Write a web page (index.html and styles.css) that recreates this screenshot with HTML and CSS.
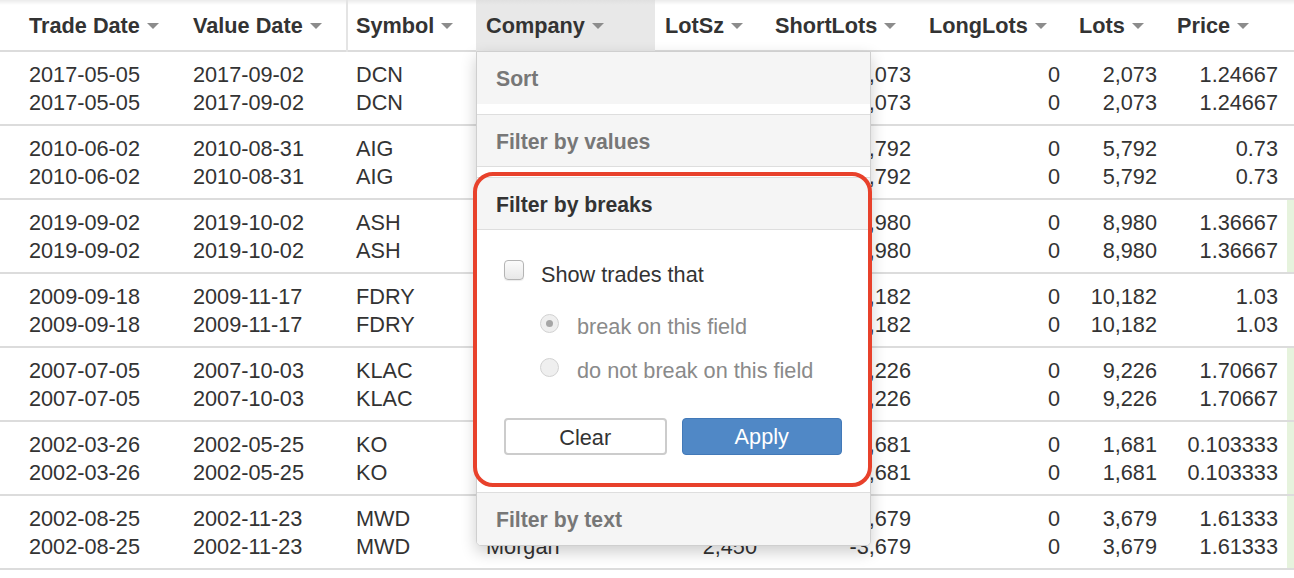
FILE: index.html
```html
<!DOCTYPE html>
<html>
<head>
<meta charset="utf-8">
<title>Trades</title>
<link rel="stylesheet" href="styles.css">
</head>
<body>
<div class="page">
  <div class="head">
    <div class="hc">Trade Date<span class="caret"></span></div>
    <div class="hc">Value Date<span class="caret"></span></div>
    <div class="hc sym">Symbol<span class="caret"></span></div>
    <div class="hc active">Company<span class="caret"></span></div>
    <div class="hc">LotSz<span class="caret"></span></div>
    <div class="hc">ShortLots<span class="caret"></span></div>
    <div class="hc">LongLots<span class="caret"></span></div>
    <div class="hc">Lots<span class="caret"></span></div>
    <div class="hc">Price<span class="caret"></span></div>
  </div>

  <div class="group">
    <div class="rows">
      <div class="row"><span>2017-05-05</span><span>2017-09-02</span><span>DCN</span><span class="co">Dana</span><span class="r r5">1,000</span><span class="r r6">-2,073</span><span class="r r7">0</span><span class="r r8">2,073</span><span class="r r9">1.24667</span></div>
      <div class="row"><span>2017-05-05</span><span>2017-09-02</span><span>DCN</span><span class="co">Dana</span><span class="r r5">1,000</span><span class="r r6">-2,073</span><span class="r r7">0</span><span class="r r8">2,073</span><span class="r r9">1.24667</span></div>
    </div>
    <div class="strip"></div>
  </div>

  <div class="group">
    <div class="rows">
      <div class="row"><span>2010-06-02</span><span>2010-08-31</span><span>AIG</span><span class="co">AIG Inc</span><span class="r r5">1,500</span><span class="r r6">-5,792</span><span class="r r7">0</span><span class="r r8">5,792</span><span class="r r9">0.73</span></div>
      <div class="row"><span>2010-06-02</span><span>2010-08-31</span><span>AIG</span><span class="co">AIG Inc</span><span class="r r5">1,500</span><span class="r r6">-5,792</span><span class="r r7">0</span><span class="r r8">5,792</span><span class="r r9">0.73</span></div>
    </div>
    <div class="strip"></div>
  </div>

  <div class="group">
    <div class="rows">
      <div class="row"><span>2019-09-02</span><span>2019-10-02</span><span>ASH</span><span class="co">Ashland</span><span class="r r5">2,000</span><span class="r r6">-8,980</span><span class="r r7">0</span><span class="r r8">8,980</span><span class="r r9">1.36667</span></div>
      <div class="row"><span>2019-09-02</span><span>2019-10-02</span><span>ASH</span><span class="co">Ashland</span><span class="r r5">2,000</span><span class="r r6">-8,980</span><span class="r r7">0</span><span class="r r8">8,980</span><span class="r r9">1.36667</span></div>
    </div>
    <div class="strip ok"></div>
  </div>

  <div class="group">
    <div class="rows">
      <div class="row"><span>2009-09-18</span><span>2009-11-17</span><span>FDRY</span><span class="co">Foundry</span><span class="r r5">2,500</span><span class="r r6">-10,182</span><span class="r r7">0</span><span class="r r8">10,182</span><span class="r r9">1.03</span></div>
      <div class="row"><span>2009-09-18</span><span>2009-11-17</span><span>FDRY</span><span class="co">Foundry</span><span class="r r5">2,500</span><span class="r r6">-10,182</span><span class="r r7">0</span><span class="r r8">10,182</span><span class="r r9">1.03</span></div>
    </div>
    <div class="strip"></div>
  </div>

  <div class="group">
    <div class="rows">
      <div class="row"><span>2007-07-05</span><span>2007-10-03</span><span>KLAC</span><span class="co">KLA</span><span class="r r5">1,800</span><span class="r r6">-9,226</span><span class="r r7">0</span><span class="r r8">9,226</span><span class="r r9">1.70667</span></div>
      <div class="row"><span>2007-07-05</span><span>2007-10-03</span><span>KLAC</span><span class="co">KLA</span><span class="r r5">1,800</span><span class="r r6">-9,226</span><span class="r r7">0</span><span class="r r8">9,226</span><span class="r r9">1.70667</span></div>
    </div>
    <div class="strip ok"></div>
  </div>

  <div class="group">
    <div class="rows">
      <div class="row"><span>2002-03-26</span><span>2002-05-25</span><span>KO</span><span class="co">Coca-Cola</span><span class="r r5">1,200</span><span class="r r6">-1,681</span><span class="r r7">0</span><span class="r r8">1,681</span><span class="r r9">0.103333</span></div>
      <div class="row"><span>2002-03-26</span><span>2002-05-25</span><span>KO</span><span class="co">Coca-Cola</span><span class="r r5">1,200</span><span class="r r6">-1,681</span><span class="r r7">0</span><span class="r r8">1,681</span><span class="r r9">0.103333</span></div>
    </div>
    <div class="strip ok"></div>
  </div>

  <div class="group">
    <div class="rows">
      <div class="row"><span>2002-08-25</span><span>2002-11-23</span><span>MWD</span><span class="co">Morgan</span><span class="r r5">2,450</span><span class="r r6">-3,679</span><span class="r r7">0</span><span class="r r8">3,679</span><span class="r r9">1.61333</span></div>
      <div class="row"><span>2002-08-25</span><span>2002-11-23</span><span>MWD</span><span class="co">Morgan</span><span class="r r5">2,450</span><span class="r r6">-3,679</span><span class="r r7">0</span><span class="r r8">3,679</span><span class="r r9">1.61333</span></div>
    </div>
    <div class="strip ok"></div>
  </div>

  <div class="menu">
    <div class="sec">
      <div class="sec-head plain">Sort</div>
      <div class="sec-gap"></div>
    </div>
    <div class="sec">
      <div class="sec-head">Filter by values</div>
      <div class="sec-gap"></div>
    </div>
    <div class="sec">
      <div class="sec-head open">Filter by breaks</div>
      <div class="sec-body">
        <div class="opt">
          <span class="cb"></span>
          <span class="opt-label">Show trades that</span>
        </div>
        <div class="opt sub first">
          <span class="rd checked"></span>
          <span class="opt-label dis">break on this field</span>
        </div>
        <div class="opt sub">
          <span class="rd"></span>
          <span class="opt-label dis">do not break on this field</span>
        </div>
        <div class="btns">
          <button class="btn">Clear</button>
          <button class="btn primary">Apply</button>
        </div>
      </div>
    </div>
    <div class="sec last">
      <div class="sec-head plain">Filter by text</div>
    </div>
  </div>

  <div class="annot"></div>
</div>
</body>
</html>
```

FILE: styles.css
```css
* { box-sizing: border-box; }

html, body {
  margin: 0;
  padding: 0;
  background: #fff;
}

body {
  font-family: "Liberation Sans", Arial, Helvetica, sans-serif;
  font-size: 21.7px;
  color: #333;
  overflow: hidden;
}

.page {
  position: relative;
  width: 1294px;
  height: 578px;
  overflow: hidden;
}

.head {
  display: grid;
  grid-template-columns: 164px 163px 130px 179px 110px 154px 150px 98px 120px;
  padding-left: 19px;
  height: 52px;
  border-bottom: 2px solid #dcdcdc;
  background: linear-gradient(to bottom, #ebebeb 0, #ffffff 5px);
}

.hc {
  font-weight: bold;
  line-height: 52px;
  padding-left: 10px;
  white-space: nowrap;
  color: #333;
}

.hc.sym {
  border-left: 2px solid #e4e4e4;
  padding-left: 8px;
}

.hc.active {
  background: linear-gradient(to bottom, #e0e0e0 0, #e8e8e8 5px, #e8e8e8 100%);
}

.caret {
  display: inline-block;
  width: 0;
  height: 0;
  margin-left: 7px;
  vertical-align: middle;
  border-top: 6px solid #8c8c8c;
  border-left: 6px solid transparent;
  border-right: 6px solid transparent;
  position: relative;
  top: -1px;
}

.group {
  display: flex;
  border-bottom: 2px solid #dcdcdc;
}

.rows {
  flex: 0 0 1287px;
  padding: 9px 0 7px 19px;
}

.row {
  display: grid;
  grid-template-columns: 164px 163px 130px 179px 110px 154px 150px 98px 120px;
  line-height: 28px;
  white-space: nowrap;
}

.row > span {
  padding-left: 10px;
  overflow: hidden;
}

.row > .r { text-align: right; }
.row > .r5 { padding-right: 8px; }
.row > .r6 { padding-right: 8px; }
.row > .r7 { padding-right: 9px; }
.row > .r8 { padding-right: 10px; }
.row > .r9 { padding-right: 9px; }

.strip {
  flex: 1 1 auto;
}

.strip.ok {
  background: #e6f3dd;
}

/* dropdown menu */
.menu {
  position: absolute;
  left: 476px;
  top: 51px;
  width: 395px;
  background: #fff;
  border: 1px solid #cfcfcf;
  border-radius: 0 0 5px 5px;
  box-shadow: 0 6px 16px rgba(0, 0, 0, 0.2);
  overflow: hidden;
}

.sec {
  border-bottom: 1px solid #dedede;
}

.sec.last {
  border-bottom: 0;
}

.sec-head {
  height: 52px;
  line-height: 53px;
  padding-left: 19px;
  background: #f5f5f5;
  border-bottom: 1px solid #dedede;
  font-weight: bold;
  font-size: 21.2px;
  color: #777;
  overflow: hidden;
}

.sec-head.plain {
  border-bottom: 0;
}

.sec-head.open {
  color: #333;
}

.sec-gap {
  height: 10px;
}

.sec-body {
  padding: 30px 28px 37px 27px;
}

.opt {
  display: flex;
  align-items: flex-start;
  height: 28px;
  line-height: 30px;
}

.opt.sub {
  padding-left: 36px;
  margin-top: 16px;
}

.opt.sub.first {
  margin-top: 24px;
}

.cb {
  flex: 0 0 20px;
  width: 20px;
  height: 20px;
  border: 1px solid #b4b4b4;
  border-radius: 4px;
  background: linear-gradient(to bottom, #fbfbfb, #e8e8e8);
  box-shadow: 0 1px 1px rgba(0, 0, 0, 0.08);
  margin-right: 17px;
}

.rd {
  flex: 0 0 19px;
  width: 19px;
  height: 19px;
  margin-top: 2px;
  border: 1px solid #d2d2d2;
  border-radius: 50%;
  background: #efefef;
  margin-right: 18px;
  display: flex;
  align-items: center;
  justify-content: center;
}

.rd.checked::after {
  content: "";
  width: 7px;
  height: 7px;
  border-radius: 50%;
  background: #a6a6a6;
}

.opt-label {
  color: #333;
  font-size: 21.7px;
  white-space: nowrap;
}

.opt-label.dis {
  color: #8a8a8a;
}

.btns {
  display: flex;
  gap: 15px;
  margin-top: 34px;
}

.btn {
  flex: 1 1 0;
  height: 37px;
  font-family: "Liberation Sans", Arial, Helvetica, sans-serif;
  font-size: 21.7px;
  line-height: 35px;
  padding: 0;
  border-radius: 4px;
  border: 2px solid #cccccc;
  background: #fff;
  color: #333;
}

.btn.primary {
  background: #5088c6;
  border: 1px solid #4279b8;
  color: #fff;
}

/* highlight annotation */
.annot {
  position: absolute;
  left: 473px;
  top: 172px;
  width: 399px;
  height: 315px;
  border: 4px solid #e8412b;
  border-radius: 20px;
  pointer-events: none;
}
```
